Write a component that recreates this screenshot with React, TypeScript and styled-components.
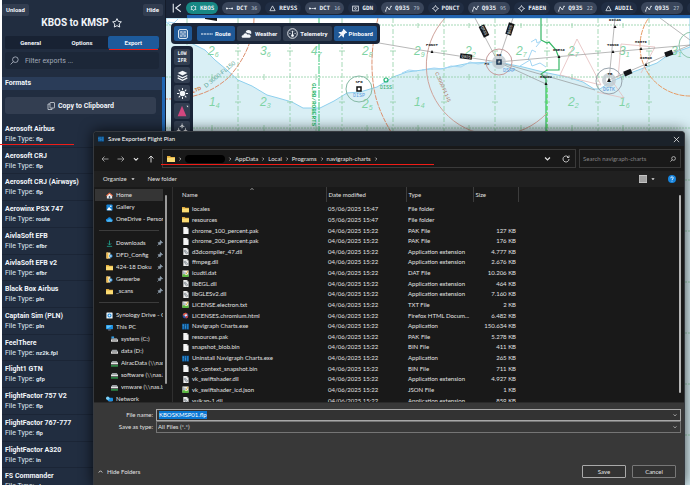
import React, { useEffect, useRef } from "react";
import styled, { createGlobalStyle, css } from "styled-components";

const GlobalStyle = createGlobalStyle`
  * { box-sizing: border-box; }
  body { margin: 0; background: #fff; overflow: hidden; }
  button, input, select { font: inherit; color: inherit; margin: 0; }
  svg { display: block; flex: none; }
`;

const ui = `Roboto, "Inter", sans-serif`;
const system = `Lato, "Open Sans", sans-serif`;

const Page = styled.div`
  position: relative;
  display: flex;
  height: 100vh;
  padding-left: 2px;
  overflow: hidden;
`;

/* ---------- flight panel ---------- */

const Panel = styled.aside`
  flex: none;
  width: 164px;
  display: flex;
  flex-direction: column;
  background: #212d40;
  border-right: 1px solid #141c2b;
  color: #f1f5fa;
  font: 700 7px/10px ${ui};
`;

const PanelTop = styled.div`
  display: flex;
  justify-content: space-between;
  padding: 4px 2px 0 0;
`;

const SmallButton = styled.button`
  height: 12px;
  padding: 0 4px;
  border: 0;
  border-radius: 2px;
  background: #323d50;
  font-size: 6px;
  line-height: 10px;
`;

const PlanTitle = styled.h1`
  display: flex;
  justify-content: center;
  align-items: center;
  gap: 3px;
  margin: 0 4px 0 0;
  height: 14px;
  font: 700 10px/14px ${ui};
`;

const Tabs = styled.div`
  display: flex;
  margin: 6px 6px 0 3px;
  height: 13px;
  border-radius: 2px;
  background: #182233;
`;

const Tab = styled.button<{ $active?: boolean }>`
  position: relative;
  flex: 1;
  padding: 0;
  border: 0;
  border-radius: 2px;
  background: ${(p) => (p.$active ? "#1d5a9b" : "transparent")};
  font-size: 6px;
`;

const RedLine = styled.i`
  position: absolute;
  z-index: 1;
  height: 1px;
  background: #f01c17;
`;

const TabLine = styled(RedLine)`
  left: 1px;
  right: 1px;
  bottom: -1px;
`;

const Filter = styled.label`
  display: flex;
  align-items: center;
  gap: 6px;
  margin: 3px 6px 0 3px;
  padding: 0 5px;
  height: 17px;
  border-radius: 3px;
  background: #1c2738;
`;

const FilterInput = styled.input`
  min-width: 0;
  flex: 1;
  padding: 0;
  border: 0;
  outline: 0;
  background: none;
  font: 400 7px/10px ${ui};
  &::placeholder { color: #a2abb9; opacity: 1; }
`;

const Scroller = styled.div`
  flex: 1;
  min-height: 0;
  display: flex;
  flex-direction: column;
  margin-top: 8px;
  border-right: 3px solid #1f66b4;
`;

const Band = styled.h2`
  margin: 0;
  padding: 0 3px;
  font: 700 7px/13px ${ui};
  background: #2a3c58;
`;

const CopyButton = styled.button`
  display: flex;
  align-items: center;
  justify-content: center;
  gap: 3px;
  flex: none;
  height: 17px;
  margin: 7px 6px 7px 3px;
  border: 0;
  border-radius: 3px;
  background: #333e51;
`;

const FormatList = styled.ul`
  flex: 1;
  display: flex;
  flex-direction: column;
  margin: 0 0 -10px;
  padding: 0;
  list-style: none;
`;

const FormatRow = styled.li`
  position: relative;
  flex: 1;
  padding: 3px 3px 0;
  border-bottom: 1px solid #1b2536;
  white-space: nowrap;
`;

const FormatType = styled.div`
  font-weight: 400;
  color: #dfe5ee;
  b { font-size: 6px; font-weight: 700; }
`;

const RowLine = styled(RedLine)`
  left: -2px;
  width: 74px;
  top: 23px;
`;

/* ---------- chart area ---------- */

const Chart = styled.main`
  flex: 1;
  min-width: 0;
  display: flex;
  flex-direction: column;
`;

const RouteBar = styled.nav`
  display: flex;
  align-items: center;
  gap: 4px;
  height: 18px;
  padding: 0 0 2px 6px;
  background: #1b2639;
  overflow: hidden;
  color: #e8edf4;
  font: 700 6px/8px "DejaVu Sans Mono", monospace;
`;

const RouteScroll = styled.div`
  flex: none;
  height: 3px;
  margin: -3px 0 0 21px;
  background: #2265b2;
`;

const CollapseButton = styled.button`
  padding: 0;
  width: 13px;
  border: 0;
  background: none;
`;

type PillKind = "origin" | "airway" | "fix";

const Pill = styled.button<{ $kind: PillKind }>`
  flex: none;
  display: flex;
  align-items: center;
  gap: 3px;
  height: 12px;
  padding: 0 4px;
  border: 0;
  border-radius: 6px;
  background: ${(p) => ({ origin: "#178884", airway: "#3a465b", fix: "#212e44" })[p.$kind]};
  small { font-size: 5px; font-weight: 400; margin-left: 1px; color: #bfc8d6; }
`;

const MapView = styled.section`
  position: relative;
  flex: 1;
  min-height: 0;
  background: #d9eff5;
  padding: 5px 0 0 5px;
  overflow: hidden;
`;

const MapDrawing = styled.svg`
  position: absolute;
  inset: 0;
  width: 100%;
  height: 100%;
`;

const toolFrame = css`
  position: relative;
  display: flex;
  gap: 2px;
  width: max-content;
  padding: 3px;
  border-radius: 4px;
  background: #1a2538;
  color: #f4f7fb;
`;

const LayerBar = styled.div`
  ${toolFrame}
  font: 700 6px/10px ${ui};
`;

const LayerButton = styled.button<{ $on?: boolean; $lead?: boolean }>`
  display: flex;
  align-items: center;
  gap: 2px;
  height: 15px;
  padding: 0 4px;
  margin-right: ${(p) => (p.$lead ? 3 : 0)}px;
  border: 0;
  border-radius: 2px;
  background: ${(p) => (p.$on ? "#1f5896" : "#323e51")};
`;

const SideBar = styled.div`
  ${toolFrame}
  flex-direction: column;
  margin-top: 2px;
`;

const SideButton = styled.button`
  display: flex;
  align-items: center;
  justify-content: center;
  width: 16px;
  height: 16px;
  padding: 0;
  border: 0;
  border-radius: 2px;
  background: #323e51;
  font: 700 5px/7px "DejaVu Sans Mono", monospace;
`;

/* ---------- save dialog ---------- */

const Dialog = styled.section`
  position: absolute;
  left: 93px;
  right: 5px;
  top: 131px;
  bottom: 0;
  display: flex;
  flex-direction: column;
  border: 1px solid #35393f;
  border-bottom: 0;
  border-radius: 4px 4px 0 0;
  background: #191919;
  box-shadow: 0 0 14px rgba(0, 0, 0, 0.75);
  color: #e2e2e2;
  font: 400 6px/10px ${system};
  overflow: hidden;
`;

const TitleBar = styled.header`
  display: flex;
  align-items: center;
  gap: 4px;
  flex: none;
  height: 14px;
  padding: 0 4px 0 4px;
  background: #1b222a;
  color: #fff;
`;

const Plain = styled.button`
  display: flex;
  align-items: center;
  gap: 4px;
  padding: 0;
  border: 0;
  background: none;
  line-height: 10px;
`;

const RefreshButton = styled(Plain)`
  margin-left: 8px;
`;

const Spacer = styled.span`
  flex: 1;
`;

const NavRow = styled.div`
  display: flex;
  align-items: center;
  flex: none;
  height: 25px;
  padding: 0 3px 0 7px;
`;

const NavButtons = styled.div`
  display: flex;
  gap: 8px;
  width: 61px;
`;

const Address = styled.div`
  position: relative;
  flex: 1;
  display: flex;
  align-items: center;
  gap: 3px;
  height: 19px;
  padding: 0 5px 0 4px;
  border: 1px solid #3a3a3a;
`;

const AddressLine = styled(RedLine)`
  left: -2px;
  width: 273px;
  bottom: 2px;
`;

const Redacted = styled.span`
  width: 40px;
  height: 8px;
  border-radius: 4px;
  background: #000;
`;

const Search = styled.label`
  display: flex;
  align-items: center;
  width: 102px;
  height: 19px;
  margin-left: 3px;
  padding: 0 4px 0 3px;
  border: 1px solid #3a3a3a;
`;

const SearchInput = styled.input`
  flex: 1;
  min-width: 0;
  padding: 0;
  border: 0;
  outline: 0;
  background: none;
  &::placeholder { color: #858585; opacity: 1; }
`;

const Commands = styled.div`
  display: flex;
  align-items: center;
  gap: 13px;
  flex: none;
  height: 16px;
  padding: 0 8px 0 9px;
  background: #202020;
`;

const Browser = styled.div`
  flex: 1;
  min-height: 0;
  display: flex;
  overflow: hidden;
`;

const Tree = styled.nav`
  flex: none;
  width: 79px;
  display: flex;
  justify-content: space-between;
  padding: 2px 5px 0 1px;
  border-right: 1px solid #2f2f2f;
`;

const TreeItems = styled.div`
  width: 68px;
  overflow: hidden;
`;

const TreeItem = styled.a<{ $active?: boolean; $nested?: boolean }>`
  display: flex;
  align-items: center;
  gap: 3px;
  height: 12px;
  padding-left: ${(p) => (p.$nested ? 16 : 11)}px;
  background: ${(p) => (p.$active ? "#353535" : "transparent")};
  color: inherit;
  text-decoration: none;
  white-space: nowrap;
`;

const TreeText = styled.span`
  flex: 1;
  min-width: 0;
  overflow: hidden;
`;

const TreeRule = styled.hr`
  height: 1px;
  margin: 5px 4px 6px;
  border: 0;
  background: #3c3c3c;
`;

const Thumb = styled.i`
  flex: none;
  width: 2px;
  margin: 6px 0 18px;
  border-radius: 1px;
  background: #9a9a9a;
`;

const ListThumb = styled(Thumb)`
  margin: 8px 3px 9px 0;
  background: #b5b5b5;
`;

const ListPane = styled.div`
  position: relative;
  flex: 1;
  min-width: 0;
  padding-left: 7px;
`;

const SortMark = styled.span`
  position: absolute;
  left: 77px;
  top: 0;
`;

const FileTable = styled.table`
  width: 338px;
  height: calc(100% + 4px);
  table-layout: fixed;
  border-collapse: collapse;
  th {
    height: 15px;
    padding: 0 2px;
    border-right: 1px solid #3c3c3c;
    font-weight: 400;
    text-align: left;
  }
  td { padding: 0 2px; white-space: nowrap; line-height: 8px; }
  td:last-child { text-align: right; }
`;

const GapRow = styled.tr`
  td { height: 2px; line-height: 0; }
`;

const FileName = styled.span`
  display: flex;
  align-items: center;
  gap: 3px;
`;

const Footer = styled.form`
  flex: none;
  display: flex;
  flex-direction: column;
  padding: 6px 3px 7px 4px;
  border-top: 1px solid #2a2a2a;
  background: #383838;
`;

const Field = styled.div`
  display: flex;
  align-items: center;
  height: 12px;
`;

const FieldLabel = styled.label`
  width: 58px;
  padding-right: 3px;
  text-align: right;
`;

const FieldBox = styled.div<{ $focus?: boolean }>`
  flex: 1;
  display: flex;
  align-items: center;
  height: 12px;
  padding: 0 3px 0 1px;
  border: 1px solid ${(p) => (p.$focus ? "#a8a8a8" : "#757575")};
  background: ${(p) => (p.$focus ? "#333" : "#383838")};
`;

const NameInput = styled.input`
  flex: 1;
  height: 8px;
  padding: 0 1px;
  border: 0;
  outline: 0;
  background: none;
  line-height: 8px;
  &::selection { background: #0a78d4; color: #fff; }
`;

const TypeSelect = styled.select`
  flex: 1;
  height: 10px;
  padding: 0;
  border: 0;
  outline: 0;
  appearance: none;
  background: none;
  line-height: 10px;
`;

const Actions = styled.div`
  display: flex;
  align-items: center;
  gap: 6px;
  margin-top: 32px;
  padding-right: 5px;
`;

const ActionButton = styled.button<{ $main?: boolean }>`
  width: 44px;
  height: 13px;
  padding: 0;
  border: 1px solid ${(p) => (p.$main ? "#a9a9a9" : "#777")};
  border-radius: 1px;
  background: #333;
  line-height: 10px;
`;

/* ---------- drawings ---------- */

const Svg = ({ s = 8, w, vb = 16, children, ...r }: any) => (
  <svg width={w || s} height={s} viewBox={`0 0 ${w ? (vb * w) / s : vb} ${vb}`} fill="none" stroke="currentColor" strokeWidth="1.8" aria-hidden="true" {...r}>
    {children}
  </svg>
);

const Chevron = ({ dir = "right", s = 4 }: { dir?: "right" | "down" | "up"; s?: number }) => (
  <Svg s={s} vb={10} strokeWidth="1.8">
    <path d={{ right: "M3.5 1.5L7 5L3.5 8.5", down: "M1.5 3.5L5 7L8.5 3.5", up: "M1.5 7L5 3.5L8.5 7" }[dir]} />
  </Svg>
);

const marks: Record<string, React.ReactNode> = {
  origin: <path d="M8 1l2 2.700 3.500-.2-1.200 3.500 1.200 3.500-3.500-.2L8 13l-2-2.700-3.500.2L3.700 7 2.500 3.500l3.500.2z" />,
  dct: <><path d="M0 8h16" strokeDasharray="5 1" /><circle cx="2" cy="8" r="1.500" fill="currentColor" /><circle cx="14" cy="8" r="1.500" fill="currentColor" /></>,
  tri: <path d="M8 2l6 11H2z" />,
  box: <><rect x="1.500" y="2.500" width="13" height="11" /><circle cx="8" cy="8" r="2" /><path d="M3 4l2 2M13 4l-2 2" strokeWidth="1" /></>,
  airway: <path d="M1 14l4-9 5 5 4-7M0 14h3M3 5h4M8 10h4M12 3h4" />,
  star: <path d="M8 1l2.500 4.500L15 8l-4.500 2.500L8 15l-2.500-4.500L1 8l4.500-2.500z" />,
};

const Plane = () => (
  <path d="M8 1c1 0 1 2 1 5l6 4v1.500L9 10v3l2 1.500v1L8 15l-3 .5v-1L7 13v-3l-6 1.500V10l6-4c0-3 0-5 1-5z" fill="currentColor" stroke="none" />
);

const fileIcons: Record<string, React.ReactNode> = {
  folder: <g stroke="none"><path d="M0 2h6l2 2h8v10H0z" fill="#e0a93a" /><path d="M0 5.500h16V14H0z" fill="#fbdc74" /></g>,
  page: <g stroke="none"><path d="M3 0h8l4 4v12H3z" fill="#f6f6f6" /><path d="M11 0v4h4z" fill="#a9a9a9" /></g>,
  dll: <g stroke="none"><path d="M3 0h8l4 4v12H3z" fill="#ededed" /><path d="M11 0v4h4z" fill="#a9a9a9" /><circle cx="7" cy="7" r="2.200" fill="none" stroke="#68727b" strokeWidth="1.500" /><circle cx="10.500" cy="11" r="2.200" fill="none" stroke="#68727b" strokeWidth="1.500" /></g>,
  note: <g stroke="none"><path d="M1 1h14v14H1z" fill="#f3f1e4" /><path d="M1 10l4-1 4 3 6-3v7H1z" fill="#58b83f" /><path d="M4 3v6M7 5v4" stroke="#4c6d9d" strokeWidth="1.500" /><path d="M14 2l-5 8" stroke="#d5a226" strokeWidth="2" /></g>,
  html: <g stroke="none"><circle cx="8" cy="8" r="6.500" fill="#2f50a5" /><path d="M2 7c1-4 5-6 8-5l4 4-6-1-3 4z" fill="#e55335" /><circle cx="9" cy="8" r="3" fill="#dfe6f5" /><path d="M8 10l6-2-1 5-4 2z" fill="#d43d3a" /></g>,
  exe: <g stroke="none"><path d="M0 1h16v14H0z" fill="#0d355b" /><path d="M1 2h3.500v12H1zM6 2h3.500v12H6zM11 2h4v12h-4z" fill="#1e7ac2" /><path d="M2 5h1v2H2zM7.500 8h1v2h-1z" fill="#7ed0ff" /></g>,
  home: <g stroke="none"><path d="M2 8l6-6 6 6v7H2z" fill="#e9e9e9" /><path d="M0 8l8-7 8 7-1.500 1.500L8 4 1.500 9.500z" fill="#e8623a" /><path d="M6.500 9h3v6h-3z" fill="#44627e" /></g>,
  gallery: <g stroke="none"><rect x="1" y="1" width="14" height="14" rx="2" fill="#1785d8" /><path d="M2 13l5-6 7 7H3z" fill="#fff" /><circle cx="11" cy="5" r="1.700" fill="#fff" /></g>,
  cloud: <g stroke="none"><path d="M3 13a3.500 3.500 0 010-7 5 5 0 019-.5A4 4 0 0113 13z" fill="#1687dd" /><path d="M1 11l8-4 6 4-2 2H3z" fill="#4fb7f2" /></g>,
  down: <path d="M8 1v10M4 7.500l4 4 4-4M2 14.500h12" stroke="#20b39c" strokeWidth="1.700" />,
  config: <g stroke="none"><path d="M1 1h9v14H1z" fill="#f5e6b8" /><path d="M1 1h4v14H1z" fill="#f0b94a" /><circle cx="11" cy="9" r="4" fill="#3a97de" /><circle cx="11" cy="9" r="1.600" fill="#fff" /></g>,
  drive: <g stroke="none"><path d="M3 4h10l3 4H0z" fill="#9aa0a5" /><path d="M0 8h16v5H0z" fill="#e6e6e6" /><path d="M2 10h12v1H2z" fill="#5b5b5b" /></g>,
  system: <g stroke="none"><path d="M1 1h6v5H1z" fill="#2f9be5" /><path d="M7 5h6l3 3H0V6z" fill="#9aa0a5" /><path d="M0 8h16v5H0z" fill="#e6e6e6" /><path d="M2 10h12v1H2z" fill="#5b5b5b" /></g>,
  net: <g stroke="none"><path d="M3 2h10l3 4H0z" fill="#9aa0a5" /><path d="M0 6h16v4H0z" fill="#e6e6e6" /><path d="M0 12h16v3H0z" fill="#35a853" /></g>,
  pc: <g stroke="none"><rect x="0" y="2" width="16" height="10" rx="1" fill="#1b8fe0" /><path d="M1.500 3.500h13L4 10.500H1.500z" fill="#62c3f8" /><path d="M5 13h6v1.500H5z" fill="#aab" /></g>,
  network: <g stroke="none"><rect x="4" y="4" width="12" height="8" rx="1" fill="#1b8fe0" /><circle cx="4" cy="5" r="4" fill="#7bd0f7" /><path d="M7 13h6v1.500H7z" fill="#aab" /></g>,
  sync: <g stroke="none"><rect x="1" y="1" width="14" height="14" rx="1" fill="#eaf5fc" /><circle cx="8" cy="8" r="3.500" fill="none" stroke="#1b87d8" strokeWidth="2.500" /></g>,
};

const FileIcon = ({ name }: { name: string }) => <Svg s={7}>{fileIcons[name]}</Svg>;

const Pin = () => (
  <Svg s={6}><path d="M9 1l6 6-3 .5-3 3-.5 3L2.500 7.500l3-.5 3-3zM6 10l-5 5" fill="#8f9fae" stroke="#8f9fae" /></Svg>
);

const vertical = [187, 238, 290, 342, 393, 444, 495, 547, 598, 649];
const horizontal = [25, 77, 128, 180, 231, 282, 333, 384, 435];
const soundings: [number, number, string, string][] = [
  [208, 55, "2", "6"], [260, 55, "3", "6"], [311, 55, "4", "7"], [362, 55, "2", "8"], [414, 55, "2", "9"],
  [465, 55, "2", "2"], [516, 55, "2", "7"], [568, 55, "2", "7"], [619, 55, "3", "1"], [671, 55, "3", "1"],
  [209, 106, "1", "4"], [260, 106, "2", "3"], [362, 108, "2", "5"], [414, 106, "1", "4"], [568, 106, "2", "2"], [619, 106, "1", "6"],
];
const fixes: [number, number, string][] = [
  [432, 52, "PONCT"], [559, 57, "ONESI"], [546, 84, "EGADU"], [613, 52, "TONNI"], [615, 27, "DIXAN"], [641, 49, "MIRTI"], [646, 65, "DIRKO"],
];

const ChartMap = () => (
  <MapDrawing viewBox="166 18 524 467" preserveAspectRatio="xMinYMin slice" fill="none" aria-hidden="true">
    <path d="M166 18H690V47L668 55L657 63L633 72L610 82L600 89L594 89L583 82L567 77L543 72L523 67L498 62L470 63L440 69L430 69L407 72L393 77L377 87L360 92L347 93L334 101L320 108L303 108L292 102L278 98L267 95L252 86L238 80L227 70L215 60L205 50L191 43L180 31L166 22Z" fill="#fff" stroke="#8ed0ee" />
    <path d="M422 70l12-2 9 1 8-3 10 1 9-5 8 2 12-2M402 73l7-3 8 1M520 66l10-6 2 6 8-3 6 4M531 42l5-3 1 4 4-2-5 6M528 60l4-10 4 2M178 19l-4 4-6-1" stroke="#a3d6f4" />
    <g stroke="#8fcfa5" strokeWidth="0.800">
      {vertical.map((x) => <path key={x} d={`M${x} 18V485`} strokeDasharray="5 2 2 2" />)}
      {horizontal.map((y) => <path key={y} d={`M166 ${y}H690`} strokeDasharray="2 1" />)}
      {vertical.map((x) => <path key={x} d={`M${x - 3} 51h6M${x - 3} 102h6M${x - 26} 74v6M${x - 26} 23v5M${x - 26} 125v6`} />)}
    </g>
    <g fill="#7fd3a4" fontFamily="Liberation Sans" fontStyle="italic" fontSize="12">
      {soundings.map(([x, y, a, b], i) => (
        <text key={i} x={x} y={y}>{a}<tspan fontSize="7" dy="2">{b}</tspan></text>
      ))}
    </g>
    <path d="M319 18V132" stroke="#3fc97c" strokeDasharray="8 1 2 1" />
    <path d="M541 18v9l0 13 6 3 2-1 7 8 3 8v12h-12l-6 4 5 5V132" stroke="#35b765" strokeWidth="1.200" />
    <path d="M547 88V132" stroke="#4de35c" strokeDasharray="4 2" strokeWidth="1.200" />
    <g stroke="#dd9271" strokeDasharray="5 1">
      <path d="M254 18C254 40 243 62 228 78C211 93 192 99 166 99" />
      <path d="M378 18C372 42 369 70 376 98C379 109 384 120 391 132" />
      <circle cx="690" cy="46" r="50" stroke="#e79b64" />
    </g>
    <path d="M445 18A68 68 0 0 0 547 113" stroke="#cfa39b" />
    <path d="M560 75l17-36 24 46zM618 78l3-34 34 3-14 26M597 92l27 6-12-17" stroke="#e5bcbc" strokeWidth="0.800" />
    <g stroke="#888" strokeWidth="0.600">
      <path d="M379 43L420 50L498 62L690 45M475 18L498 62L513 18M498 62L546 84M609 80L615 18M609 80L690 45M660 18L690 40M498 62L595 90" />
    </g>
    <g stroke="#bfc9cf">
      <circle cx="499" cy="62" r="13" stroke="#c69c9c" /><circle cx="499" cy="62" r="5" strokeWidth="4" opacity=".8" />
      <circle cx="609" cy="81" r="13" stroke="#98a4ad" /><circle cx="609" cy="80" r="5" strokeWidth="4" opacity=".8" />
      <circle cx="359" cy="89" r="13" stroke="#86b9a5" /><circle cx="692" cy="45" r="13" stroke="#8fc6ac" />
    </g>
    <rect x="357" y="87" width="4" height="4" stroke="#111" strokeWidth="1.500" />
    <rect x="497" y="60" width="4" height="4" stroke="#17304c" strokeWidth="1.500" />
    <path d="M607 82l2-4 2 4z" fill="#111" />
    <circle cx="386" cy="80" r="2" stroke="#22b573" strokeWidth="1.200" />
    {fixes.map(([x, y]) => <path key={x} d={`M${x - 1.5} ${y + 1}l1.500-3 1.500 3z`} fill="#111" />)}
    <g fill="#15171a">
      <rect x="-6" y="-3" width="12" height="6" transform="translate(484 31) rotate(64)" />
      <rect x="-6" y="-3" width="12" height="6" transform="translate(510 29) rotate(-72)" />
      <rect x="-6" y="-3" width="12" height="5" transform="translate(466 57) rotate(8)" />
      <rect x="-4" y="-3" width="8" height="5" transform="translate(628 73) rotate(-23)" />
      <rect x="-4" y="-3" width="8" height="5" transform="translate(669 54) rotate(-20)" />
      <path d="M205 18h12v3l-12-2z" />
    </g>
    <g fill="#eee" fontFamily="Liberation Mono" fontSize="4" textAnchor="middle">
      <text transform="translate(483 31) rotate(64)">Q935</text>
      <text transform="translate(511 30) rotate(-72)">Q935</text>
      <text transform="translate(466 58) rotate(8)">Q935</text>
    </g>
    <g fill="#15171a" fontFamily="Liberation Mono" fontWeight="700" fontSize="4" textAnchor="middle">
      {fixes.map(([x, y, n]) => <text key={n} x={x} y={y - 6}>{n}</text>)}
      <text x="359" y="83">SPO</text><text x="499" y="56">ND</text><text x="487" y="65">PX</text><text x="610" y="75">TE</text>
    </g>
    <g fontFamily="Liberation Mono" fontSize="5" textAnchor="middle">
      <text x="359" y="97" fill="#5b9be0">DISP</text>
      <text x="386" y="89" fill="#2dab6b">DISS</text>
      <text x="509" y="72" fill="#5b9be0">DSAP</text>
      <text x="609" y="91" fill="#4d8fd8">DGTK</text>
    </g>
    <g fontFamily="Liberation Sans" fontSize="5">
      <text transform="translate(193 93) rotate(-22)" fill="#d77c3c" fontWeight="700">LTD</text>
      <text transform="translate(206 88) rotate(-39)" fill="#5ba695" fontSize="6">D 3000-FL150</text>
      <text transform="translate(435 73) rotate(66)" fill="#a9735f">C 3000-FL145</text>
      <text transform="translate(312 83) rotate(90)" fill="#24b566" fontFamily="Liberation Mono" fontWeight="700" fontSize="6">GLRB/ROBERTS</text>
    </g>
  </MapDrawing>
);

/* ---------- data ---------- */

const formats: [string, string][] = [
  ["Aerosoft Airbus", "flp"], ["Aerosoft CRJ", "flp"], ["Aerosoft CRJ (Airways)", "flp"], ["Aerowinx PSX 747", "route"],
  ["AivlaSoft EFB", "efbr"], ["AivlaSoft EFB v2", "efbr"], ["Black Box Airbus", "pln"], ["Captain Sim (PLN)", "pln"],
  ["FeelThere", "nz2k.fpl"], ["Flight1 GTN", "gfp"], ["FlightFactor 757 V2", "flp"], ["FlightFactor 767-777", "flp"],
  ["FlightFactor A320", "in"], ["FS Commander", "plg"],
];

const route: [string, string, PillKind, string?][] = [
  ["KBOS", "origin", "origin"], ["DCT", "dct", "airway", "36"], ["REVSS", "tri", "fix"], ["DCT", "dct", "airway", "16"],
  ["GDN", "box", "fix"], ["Q935", "airway", "airway", "79"], ["PONCT", "star", "fix"], ["Q935", "airway", "airway", "95"],
  ["FABEN", "star", "fix"], ["Q935", "airway", "airway", "22"], ["AUDIL", "tri", "fix"], ["Q935", "airway", "airway", "27"], ["", "tri", "fix"],
];

const tree: ([string, string, string?] | null)[] = [
  ["Home", "home"], ["Gallery", "gallery"], ["OneDrive - Personal", "cloud"], null,
  ["Downloads", "down", "pin"], ["DFD_Config", "config", "pin"], ["424-18 Doku", "folder", "pin"], ["Gewerbe", "config", "pin"], ["_scans", "folder", "pin"], null,
  ["Synology Drive - C", "sync"], ["This PC", "pc"], ["system (C:)", "system", "nested"], ["data (D:)", "drive", "nested"],
  ["AiracData (\\\\nas", "net", "nested"], ["software (\\\\nas.l", "net", "nested"], ["vmware (\\\\nas.la", "net", "nested"], ["Network", "network"],
];

const ext = "Application extension";
const files: [string, string, string, string][] = [
  ["folder", "locales", "File folder", ""], ["folder", "resources", "File folder", ""],
  ["page", "chrome_100_percent.pak", "PAK File", "127 KB"], ["page", "chrome_200_percent.pak", "PAK File", "176 KB"],
  ["dll", "d3dcompiler_47.dll", ext, "4.777 KB"], ["dll", "ffmpeg.dll", ext, "2.676 KB"], ["note", "icudtl.dat", "DAT File", "10.206 KB"],
  ["dll", "libEGL.dll", ext, "464 KB"], ["dll", "libGLESv2.dll", ext, "7.160 KB"], ["note", "LICENSE.electron.txt", "TXT File", "2 KB"],
  ["html", "LICENSES.chromium.html", "Firefox HTML Docum...", "6.482 KB"], ["exe", "Navigraph Charts.exe", "Application", "150.634 KB"],
  ["page", "resources.pak", "PAK File", "5.278 KB"], ["page", "snapshot_blob.bin", "BIN File", "411 KB"],
  ["exe", "Uninstall Navigraph Charts.exe", "Application", "265 KB"], ["page", "v8_context_snapshot.bin", "BIN File", "711 KB"],
  ["dll", "vk_swiftshader.dll", ext, "4.927 KB"], ["note", "vk_swiftshader_icd.json", "JSON File", "1 KB"], ["dll", "vulkan-1.dll", ext, "859 KB"],
];

/* ---------- views ---------- */

const FlightPanel = () => (
  <Panel>
    <PanelTop><SmallButton>Unload</SmallButton><SmallButton>Hide</SmallButton></PanelTop>
    <PlanTitle>
      KBOS to KMSP
      <Svg s={10} strokeWidth="1.500"><path d="M8 1l2.200 4.500 4.800.7-3.500 3.400.8 4.900L8 12.200l-4.300 2.300.8-4.900L1 6.200l4.800-.7z" /></Svg>
    </PlanTitle>
    <Tabs>
      <Tab>General</Tab><Tab>Options</Tab><Tab $active>Export<TabLine /></Tab>
    </Tabs>
    <Filter>
      <Svg s={9} strokeWidth="1.400" color="#b9c1cd"><circle cx="9.500" cy="6.500" r="5" /><path d="M6 10l-5 5" /></Svg>
      <FilterInput placeholder="Filter exports ..." aria-label="Filter exports" />
    </Filter>
    <Scroller>
      <Band>Formats</Band>
      <CopyButton>
        <Svg s={8} strokeWidth="1.300"><rect x="6" y="1" width="9" height="11" rx="1" /><path d="M6 4H2v11h8v-3" /></Svg>
        Copy to Clipboard
      </CopyButton>
      <FormatList>
        {formats.map(([name, type], i) => (
          <FormatRow key={name}>
            {name}
            <FormatType>File Type: <b>{type}</b></FormatType>
            {i === 0 && <RowLine />}
          </FormatRow>
        ))}
      </FormatList>
    </Scroller>
  </Panel>
);

const ChartArea = () => (
  <Chart>
    <RouteBar>
      <CollapseButton aria-label="Collapse route">
        <Svg s={10} strokeWidth="1.700"><path d="M2 1v14M14 2L6 8l8 6" /></Svg>
      </CollapseButton>
      {route.map(([label, mark, kind, n], i) => (
        <Pill key={i} $kind={kind}>
          <Svg s={7}>{marks[mark]}</Svg>{label}{n && <small>{n}</small>}
        </Pill>
      ))}
    </RouteBar>
    <RouteScroll />
    <MapView>
      <ChartMap />
      <LayerBar>
        <LayerButton $on $lead aria-label="Layout">
          <Svg s={10} strokeWidth="1.600"><rect x="1" y="1" width="14" height="14" rx="2" /><path d="M8 3v10M3 8h10M4 4h2v2H4zM10 4h2v2h-2zM4 10h2v2H4zM10 10h2v2h-2z" strokeWidth="1" /></Svg>
        </LayerButton>
        <LayerButton $on><Svg s={6} w={12}><path d="M0 8h32" strokeDasharray="6 1.500" strokeWidth="3" /></Svg>Route</LayerButton>
        <LayerButton>
          <Svg s={10} w={12} stroke="none"><circle cx="12" cy="6" r="4.500" fill="currentColor" /><path d="M3 15a3 3 0 010-6 4.500 4.500 0 018-1 3.500 3.500 0 013 7z" fill="currentColor" stroke="#323e51" /></Svg>
          Weather
        </LayerButton>
        <LayerButton>
          <Svg s={11} strokeWidth="1.300"><circle cx="8" cy="8" r="7" /><path d="M8 11V4M3.500 8H5M11 8h1.500M5 4l1 1M11 4l-1 1" /><circle cx="8" cy="11" r="1.500" fill="currentColor" /></Svg>
          Telemetry
        </LayerButton>
        <LayerButton $on>
          <Svg s={9}><path d="M10 1l5 5-2 .5-3 3-.5 4L2.500 6.500l4-.5 3-3zM6 10l-5 5" fill="currentColor" /></Svg>
          Pinboard
        </LayerButton>
      </LayerBar>
      <SideBar>
        <SideButton>LOW IFR</SideButton>
        <SideButton aria-label="Layers">
          <Svg s={11}><path d="M8 1l7 3.500L8 8 1 4.500z" fill="currentColor" stroke="none" /><path d="M1 8l7 3.500L15 8M1 11.500L8 15l7-3.500" /></Svg>
        </SideButton>
        <SideButton aria-label="Brightness">
          <Svg s={11} strokeWidth="1.500"><circle cx="8" cy="8" r="3.300" fill="currentColor" /><path d="M8 0v3M8 13v3M0 8h3M13 8h3M2.500 2.500l2 2M11.500 11.500l2 2M2.500 13.500l2-2M11.500 4.500l2-2" /></Svg>
        </SideButton>
        <SideButton aria-label="Orientation">
          <Svg s={14}><path d="M8 2l5 12H3z" fill="#d2477f" stroke="none" /><path d="M13 2h2v2z" fill="currentColor" stroke="none" /></Svg>
        </SideButton>
        <SideButton aria-label="Traffic">
          <Svg s={12}><g transform="translate(4.500 0) scale(.45)"><Plane /></g><g transform="translate(0 6) scale(.45)"><Plane /></g><g transform="translate(9 6) scale(.45)"><Plane /></g></Svg>
        </SideButton>
      </SideBar>
    </MapView>
  </Chart>
);

const SaveDialog = () => {
  const nameRef = useRef<HTMLInputElement>(null);
  useEffect(() => {
    nameRef.current?.focus();
    nameRef.current?.select();
  }, []);
  return (
    <Dialog role="dialog" aria-label="Save Exported Flight Plan">
      <TitleBar>
        <Svg s={6}>{fileIcons.exe}</Svg>
        Save Exported Flight Plan
        <Spacer />
        <Plain aria-label="Close"><Svg s={7} strokeWidth="1.600"><path d="M2 2l12 12M14 2L2 14" /></Svg></Plain>
      </TitleBar>
      <NavRow>
        <NavButtons>
          <Plain aria-label="Back"><Svg s={8} color="#a5a5a5"><path d="M15 8H2M7 3L2 8l5 5" /></Svg></Plain>
          <Plain aria-label="Forward"><Svg s={8} color="#a5a5a5"><path d="M1 8h13M9 3l5 5-5 5" /></Svg></Plain>
          <Plain aria-label="Recent locations"><Chevron dir="down" s={6} /></Plain>
          <Plain aria-label="Up"><Svg s={8}><path d="M8 15V2M3 7l5-5 5 5" /></Svg></Plain>
        </NavButtons>
        <Address>
          <Svg s={8}>{fileIcons.folder}</Svg>
          <Chevron />
          <Redacted />
          {["AppData", "Local", "Programs", "navigraph-charts"].map((p) => (
            <React.Fragment key={p}><Chevron /><Plain>{p}</Plain></React.Fragment>
          ))}
          <Chevron />
          <Spacer />
          <Plain aria-label="Previous locations"><Chevron dir="down" s={7} /></Plain>
          <RefreshButton aria-label="Refresh">
            <Svg s={8} strokeWidth="1.700"><path d="M14 8a6 6 0 11-2-4.500M14 1v4h-4" /></Svg>
          </RefreshButton>
          <AddressLine />
        </Address>
        <Search>
          <SearchInput placeholder="Search navigraph-charts" aria-label="Search navigraph-charts" />
          <Svg s={6}><circle cx="9.500" cy="6.500" r="5" /><path d="M6 10l-5 5" /></Svg>
        </Search>
      </NavRow>
      <Commands>
        <Plain>Organize <Svg s={4} vb={10}><path d="M1 3h8L5 8z" fill="currentColor" stroke="none" /></Svg></Plain>
        <Plain>New folder</Plain>
        <Spacer />
        <Plain aria-label="View">
          <Svg s={8}><path d="M0 0h16v16H0z" fill="#c4c4c4" stroke="none" /><path d="M1 4h14M1 8h14M1 12h14" stroke="#777" /></Svg>
          <Svg s={4} vb={10}><path d="M1 3h8L5 8z" fill="currentColor" stroke="none" /></Svg>
        </Plain>
        <Plain aria-label="Help">
          <Svg s={8}><circle cx="8" cy="8" r="8" fill="#1684dd" stroke="none" /><path d="M5.500 6.500c0-4 5-3.500 5-.5 0 2-2.500 2-2.500 4M8 11.500v1.500" stroke="#fff" /></Svg>
        </Plain>
      </Commands>
      <Browser>
        <Tree>
          <TreeItems>
            {tree.map((t, i) => t === null ? <TreeRule key={i} /> : (
              <TreeItem key={i} href="#" $active={i === 0} $nested={t[2] === "nested"}>
                <FileIcon name={t[1]} /><TreeText>{t[0]}</TreeText>{t[2] === "pin" && <Pin />}
              </TreeItem>
            ))}
          </TreeItems>
          <Thumb />
        </Tree>
        <ListPane>
          <SortMark><Chevron dir="up" /></SortMark>
          <FileTable>
            <colgroup><col width="146" /><col width="80" /><col width="67" /><col width="45" /></colgroup>
            <thead><tr><th>Name</th><th>Date modified</th><th>Type</th><th>Size</th></tr></thead>
            <tbody>
              <GapRow><td colSpan={4} /></GapRow>
              {files.map(([icon, name, type, size], i) => (
                <tr key={name}>
                  <td><FileName><FileIcon name={icon} />{name}</FileName></td>
                  <td>{i < 2 ? "05/06/2025 15:47" : "04/06/2025 15:22"}</td>
                  <td>{type}</td>
                  <td>{size}</td>
                </tr>
              ))}
            </tbody>
          </FileTable>
        </ListPane>
        <ListThumb />
      </Browser>
      <Footer onSubmit={(e) => e.preventDefault()}>
        <Field>
          <FieldLabel htmlFor="file-name">File name:</FieldLabel>
          <FieldBox $focus>
            <NameInput id="file-name" ref={nameRef} defaultValue="KBOSKMSP01.flp" />
            <Chevron dir="down" />
          </FieldBox>
        </Field>
        <Field>
          <FieldLabel htmlFor="file-type">Save as type:</FieldLabel>
          <FieldBox>
            <TypeSelect id="file-type"><option>All Files (*.*)</option></TypeSelect>
            <Chevron dir="down" />
          </FieldBox>
        </Field>
        <Actions>
          <Plain type="button"><Chevron dir="up" s={5} />Hide Folders</Plain>
          <Spacer />
          <ActionButton $main type="submit">Save</ActionButton>
          <ActionButton type="button">Cancel</ActionButton>
        </Actions>
      </Footer>
    </Dialog>
  );
};

export default function App() {
  return (
    <>
      <GlobalStyle />
      <Page>
        <FlightPanel />
        <ChartArea />
        <SaveDialog />
      </Page>
    </>
  );
}
